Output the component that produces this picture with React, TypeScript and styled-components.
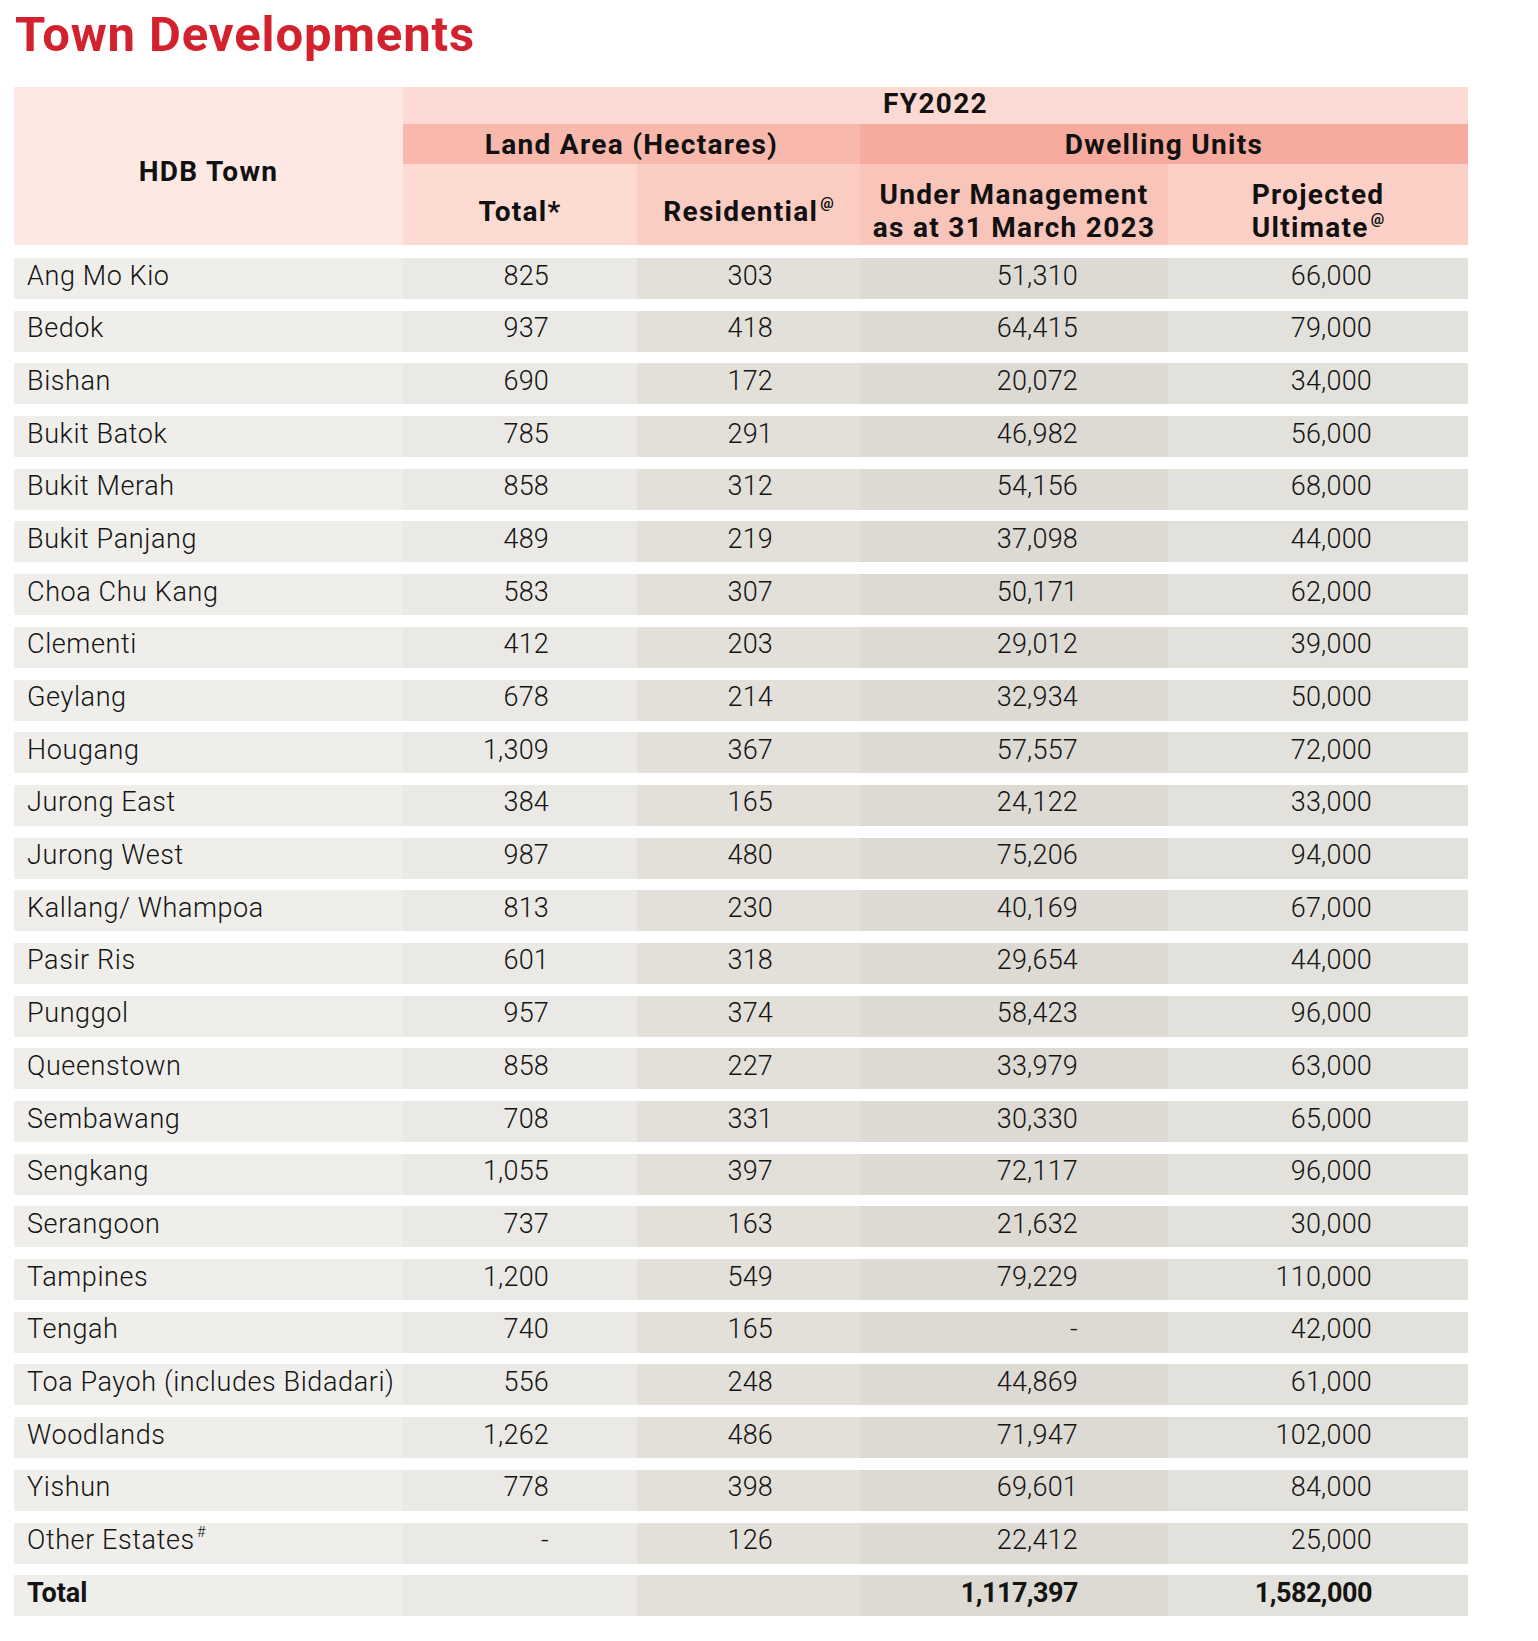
import React from "react";
import styled, { createGlobalStyle } from "styled-components";

const GlobalStyle = createGlobalStyle`
  html, body {
    margin: 0;
    padding: 0;
    background: #ffffff;
  }
  body {
    font-family: Roboto, "Liberation Sans", Arial, sans-serif;
    color: #141414;
  }
`;

const COLS = "389px 234px 223px 308px 300px";

type Tone = "name" | "total" | "res" | "under" | "proj";

const toneBg: Record<Tone, string> = {
  name: "#f0eeeb",
  total: "#ebe9e5",
  res: "#e2e0d9",
  under: "#dcdad3",
  proj: "#e3e1db",
};

const Page = styled.div`
  padding: 10px 0 40px 14px;
`;

const Title = styled.h1`
  margin: 0;
  height: 49px;
  font-family: Roboto, "Liberation Sans", sans-serif;
  font-size: 49px;
  line-height: 49px;
  font-weight: 700;
  color: #d3222d;
  letter-spacing: 0.9px;
  padding-left: 1px;
`;

const Table = styled.div`
  width: 1454px;
  margin-top: 28px;
`;

const HeadGrid = styled.div`
  display: grid;
  grid-template-columns: ${COLS};
  grid-template-rows: 37px 40px 81px;
`;

const HeadCell = styled.div<{ $bg: string; $col: string; $row: string; $pt?: number; $pb?: number }>`
  grid-column: ${(p) => p.$col};
  grid-row: ${(p) => p.$row};
  background: ${(p) => p.$bg};
  display: flex;
  align-items: center;
  justify-content: center;
  text-align: center;
  font-weight: 700;
  font-size: 28px;
  letter-spacing: 1.3px;
  line-height: 33px;
  color: #111;
  padding-top: ${(p) => p.$pt ?? 0}px;
  padding-bottom: ${(p) => p.$pb ?? 0}px;
  box-sizing: border-box;
`;

const Sup = styled.span`
  display: inline-block;
  font-size: 15px;
  line-height: 15px;
  vertical-align: top;
  position: relative;
  top: 1px;
  margin-left: 2px;
  letter-spacing: 0;
`;

const Body = styled.div`
  display: flex;
  flex-direction: column;
  gap: 11.7px;
  margin-top: 13px;
`;

const Row = styled.div`
  display: grid;
  grid-template-columns: ${COLS};
  height: 41px;
`;

const NameCell = styled.div<{ $bold?: boolean }>`
  background: ${toneBg.name};
  display: flex;
  align-items: center;
  padding-left: 13px;
  font-size: 27px;
  font-weight: ${(p) => (p.$bold ? 700 : 300)};
  letter-spacing: ${(p) => (p.$bold ? "0" : "0.6px")};
  white-space: nowrap;
  padding-bottom: 6px;
  box-sizing: border-box;
`;

const NumCell = styled.div<{ $tone: Tone; $pr: number; $bold?: boolean }>`
  background: ${(p) => toneBg[p.$tone]};
  display: flex;
  align-items: center;
  justify-content: flex-end;
  padding-right: ${(p) => p.$pr}px;
  font-size: 27px;
  font-weight: ${(p) => (p.$bold ? 700 : 300)};
  letter-spacing: ${(p) => (p.$bold ? "-0.5px" : "0.2px")};
  white-space: nowrap;
  padding-bottom: 6px;
  box-sizing: border-box;
`;

type Rec = { name: React.ReactNode; total: string; res: string; under: string; proj: string };

const rows: Rec[] = [
  { name: "Ang Mo Kio", total: "825", res: "303", under: "51,310", proj: "66,000" },
  { name: "Bedok", total: "937", res: "418", under: "64,415", proj: "79,000" },
  { name: "Bishan", total: "690", res: "172", under: "20,072", proj: "34,000" },
  { name: "Bukit Batok", total: "785", res: "291", under: "46,982", proj: "56,000" },
  { name: "Bukit Merah", total: "858", res: "312", under: "54,156", proj: "68,000" },
  { name: "Bukit Panjang", total: "489", res: "219", under: "37,098", proj: "44,000" },
  { name: "Choa Chu Kang", total: "583", res: "307", under: "50,171", proj: "62,000" },
  { name: "Clementi", total: "412", res: "203", under: "29,012", proj: "39,000" },
  { name: "Geylang", total: "678", res: "214", under: "32,934", proj: "50,000" },
  { name: "Hougang", total: "1,309", res: "367", under: "57,557", proj: "72,000" },
  { name: "Jurong East", total: "384", res: "165", under: "24,122", proj: "33,000" },
  { name: "Jurong West", total: "987", res: "480", under: "75,206", proj: "94,000" },
  { name: "Kallang/ Whampoa", total: "813", res: "230", under: "40,169", proj: "67,000" },
  { name: "Pasir Ris", total: "601", res: "318", under: "29,654", proj: "44,000" },
  { name: "Punggol", total: "957", res: "374", under: "58,423", proj: "96,000" },
  { name: "Queenstown", total: "858", res: "227", under: "33,979", proj: "63,000" },
  { name: "Sembawang", total: "708", res: "331", under: "30,330", proj: "65,000" },
  { name: "Sengkang", total: "1,055", res: "397", under: "72,117", proj: "96,000" },
  { name: "Serangoon", total: "737", res: "163", under: "21,632", proj: "30,000" },
  { name: "Tampines", total: "1,200", res: "549", under: "79,229", proj: "110,000" },
  { name: "Tengah", total: "740", res: "165", under: "-", proj: "42,000" },
  { name: "Toa Payoh (includes Bidadari)", total: "556", res: "248", under: "44,869", proj: "61,000" },
  { name: "Woodlands", total: "1,262", res: "486", under: "71,947", proj: "102,000" },
  { name: "Yishun", total: "778", res: "398", under: "69,601", proj: "84,000" },
  {
    name: (
      <span>
        Other Estates<Sup>#</Sup>
      </span>
    ),
    total: "-",
    res: "126",
    under: "22,412",
    proj: "25,000",
  },
];

export default function App() {
  return (
    <>
      <GlobalStyle />
      <Page>
        <Title>Town Developments</Title>
        <Table>
          <HeadGrid>
            <HeadCell $bg="#fde8e3" $col="1" $row="1 / 4" $pt={11}>
              HDB Town
            </HeadCell>
            <HeadCell $bg="#fcdad3" $col="2 / 6" $row="1" $pb={4}>
              FY2022
            </HeadCell>
            <HeadCell $bg="#f8b8ac" $col="2 / 4" $row="2">
              Land Area (Hectares)
            </HeadCell>
            <HeadCell $bg="#f7aa9e" $col="4 / 6" $row="2">
              Dwelling Units
            </HeadCell>
            <HeadCell $bg="#fddbd3" $col="2" $row="3" $pt={13}>
              Total*
            </HeadCell>
            <HeadCell $bg="#faccc2" $col="3" $row="3" $pt={13}>
              <span>
                Residential<Sup>@</Sup>
              </span>
            </HeadCell>
            <HeadCell $bg="#f9c4b9" $col="4" $row="3" $pt={12}>
              <span>
                Under Management
                <br />
                as at 31 March 2023
              </span>
            </HeadCell>
            <HeadCell $bg="#fcd0c7" $col="5" $row="3" $pt={12}>
              <span>
                Projected
                <br />
                Ultimate<Sup>@</Sup>
              </span>
            </HeadCell>
          </HeadGrid>
          <Body>
            {rows.map((r, i) => (
              <Row key={i}>
                <NameCell>{r.name}</NameCell>
                <NumCell $tone="total" $pr={88}>{r.total}</NumCell>
                <NumCell $tone="res" $pr={87}>{r.res}</NumCell>
                <NumCell $tone="under" $pr={90}>{r.under}</NumCell>
                <NumCell $tone="proj" $pr={96}>{r.proj}</NumCell>
              </Row>
            ))}
            <Row>
              <NameCell $bold>Total</NameCell>
              <NumCell $tone="total" $pr={88} />
              <NumCell $tone="res" $pr={87} />
              <NumCell $tone="under" $pr={90} $bold>
                1,117,397
              </NumCell>
              <NumCell $tone="proj" $pr={96} $bold>
                1,582,000
              </NumCell>
            </Row>
          </Body>
        </Table>
      </Page>
    </>
  );
}
